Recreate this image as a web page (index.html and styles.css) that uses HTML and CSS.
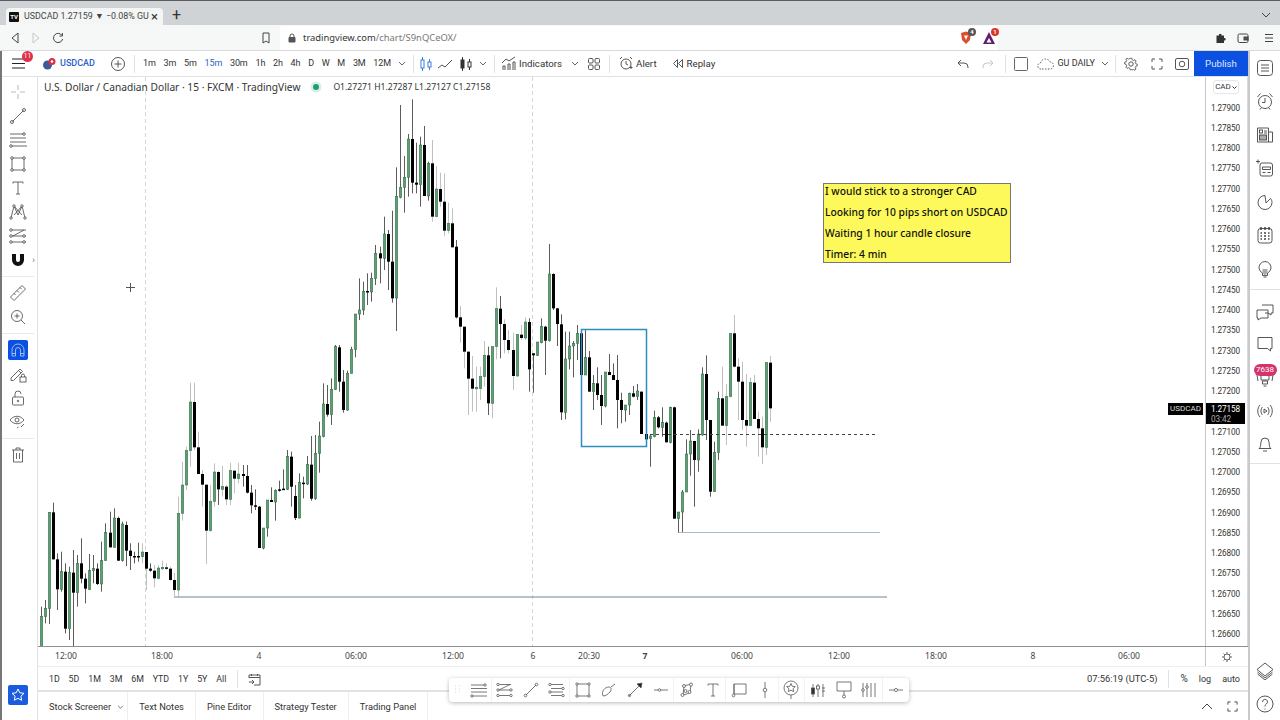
FILE: index.html
```html
<!DOCTYPE html>
<html lang="en">
<head>
<meta charset="utf-8">
<title>USDCAD chart</title>
<link rel="stylesheet" href="styles.css">
</head>
<body>
<div class="tabbar">
  <div class="tab">
    <span class="favicon">TV</span>
    <span class="tab-title">USDCAD 1.27159 ▼ −0.08% GU</span>
    <span class="tab-x">×</span>
  </div>
  <span class="tab-plus">+</span>
  <svg class="tab-chev" width="10" height="6" viewBox="0 0 10 6"><path d="M1 1l4 4 4-4"/></svg>
</div>
<div class="navbar">
  <svg class="nav-i nav-back" width="10" height="12" viewBox="0 0 10 12"><path d="M8 1L2 6l6 5z"/></svg>
  <svg class="nav-i nav-fwd" width="10" height="12" viewBox="0 0 10 12"><path d="M2 1l6 5-6 5z"/></svg>
  <svg class="nav-i nav-reload" width="12" height="12" viewBox="0 0 12 12"><path d="M10 3.500A4.600 4.600 0 1 0 10.600 7M10.400 1v3H7.500"/></svg>
  <svg class="nav-i nav-book" width="10" height="12" viewBox="0 0 10 12"><path d="M2 1h6v10L5 9l-3 2z"/></svg>
  <div class="urlbox">
    <svg class="lock" width="8" height="10" viewBox="0 0 8 10"><path d="M1 4.500h6V9H1z" fill="#555"/><path d="M2 4.500V3a2 2 0 0 1 4 0v1.500"/></svg>
    <span class="url">tradingview.com<span class="url-path">/chart/S9nQCeOX/</span></span>
  </div>
  <span class="ext ext-brave"><svg width="14" height="14" viewBox="0 0 14 14"><path d="M2 2l5-1.500 5 1.500-1 7-4 4-4-4z" fill="#d9502e" stroke="none"/><path d="M5 4.500h4L7 9z" fill="#fff" stroke="none"/></svg><b class="ext-badge ext-gray">4</b></span>
  <span class="ext ext-bat"><svg width="14" height="14" viewBox="0 0 14 14"><path d="M7 1l6 12H1z" fill="#5d1f6e" stroke="none"/><path d="M7 7l2.500 4.500h-5z" fill="#fff" stroke="none"/></svg><b class="ext-badge ext-red">1</b></span>
  <svg class="nav-i nav-puzzle" width="12" height="12" viewBox="0 0 12 12"><path d="M1.500 3.500h2.500a1.300 1.300 0 1 1 2.500 0H9V6a1.300 1.300 0 1 1 0 2.500V11H1.500z" fill="#333" stroke="none"/></svg>
  <svg class="nav-i nav-wallet" width="12" height="12" viewBox="0 0 12 12"><rect x="1" y="2" width="10" height="8.500" rx="1.500"/><rect x="7" y="5" width="4" height="3" fill="#555"/></svg>
  <svg class="nav-i nav-menu" width="10" height="10" viewBox="0 0 10 10"><path d="M1 1.500h8M1 5h8M1 8.500h8"/></svg>
</div>
<div class="app">
  <div class="topbar">
    <div class="hamb">
      <svg width="13" height="11" viewBox="0 0 13 11"><path d="M0 1h13M0 5.500h13M0 10h13"/></svg>
      <b class="hamb-badge">11</b>
    </div>
    <div class="symbol">
      <svg width="13" height="13" viewBox="0 0 13 13"><circle cx="4.500" cy="8" r="4.500" fill="#3c5a9a" stroke="none"/><circle cx="9" cy="4.500" r="3.500" fill="#d8324a" stroke="none"/><circle cx="9" cy="4.500" r="1.200" fill="#fff" stroke="none"/></svg>
      <span>USDCAD</span>
    </div>
    <svg class="add-sym" width="16" height="16" viewBox="0 0 16 16"><circle cx="8" cy="8" r="6.500"/><path d="M8 4.500v7M4.500 8h7"/></svg>
    <i class="sep sep-sym"></i>
    <div class="intervals">
      <span>1m</span><span>3m</span><span>5m</span><span class="active">15m</span><span>30m</span><span>1h</span><span>2h</span><span>4h</span><span>D</span><span>W</span><span>M</span><span>3M</span><span>12M</span>
    </div>
    <svg class="chev chev-iv" width="8" height="5" viewBox="0 0 8 5"><path d="M1 1l3 3 3-3"/></svg>
    <i class="sep sep-iv"></i>
    <svg class="tb tb-candle" width="14" height="16" viewBox="0 0 14 16"><path d="M3.500 1v14M10.500 3v11" stroke="#3d7fd8"/><rect x="2" y="4" width="3" height="8" fill="#fff" stroke="#3d7fd8"/><rect x="9" y="6" width="3" height="5" fill="#fff" stroke="#3d7fd8"/></svg>
    <svg class="tb tb-line" width="16" height="10" viewBox="0 0 16 10"><path d="M1 9l4-3 3 2 7-7"/></svg>
    <svg class="tb tb-candle2" width="14" height="16" viewBox="0 0 14 16"><path d="M3.500 1v14M10.500 3v11"/><rect x="2" y="4" width="3" height="8" fill="#333"/><rect x="9" y="6" width="3" height="5" fill="#fff"/></svg>
    <svg class="chev chev-ct" width="8" height="5" viewBox="0 0 8 5"><path d="M1 1l3 3 3-3"/></svg>
    <i class="sep sep-ct"></i>
    <svg class="tb tb-ind" width="16" height="15" viewBox="0 0 16 15"><path d="M1 7l4-4 3 2 6-4M2 14V10h2v4M7 14V8h2v6M12 14V6h2v8"/></svg>
    <span class="tb-text tb-ind-t">Indicators</span>
    <svg class="chev chev-ind" width="8" height="5" viewBox="0 0 8 5"><path d="M1 1l3 3 3-3"/></svg>
    <svg class="tb tb-grid" width="12" height="12" viewBox="0 0 12 12"><rect x=".5" y=".5" width="4.500" height="4.500" rx="1"/><rect x="7" y=".5" width="4.500" height="4.500" rx="1"/><rect x=".5" y="7" width="4.500" height="4.500" rx="1"/><rect x="7" y="7" width="4.500" height="4.500" rx="1"/></svg>
    <i class="sep sep-grid"></i>
    <svg class="tb tb-alert" width="15" height="15" viewBox="0 0 15 15"><circle cx="7" cy="8" r="5"/><path d="M7 5v3l2 1M1 3l2-2M13 3l-2-2M12 13v-3M10.500 11.500h3"/></svg>
    <span class="tb-text tb-alert-t">Alert</span>
    <svg class="tb tb-replay" width="12" height="11" viewBox="0 0 12 11"><path d="M5.500 1.500L1.500 5.500l4 4zM10.500 1.500l-4 4 4 4z"/></svg>
    <span class="tb-text tb-replay-t">Replay</span>
    <svg class="tb tb-undo" width="12" height="10" viewBox="0 0 12 10"><path d="M4 1L1 4l3 3M1 4h6a4 4 0 0 1 4 4v1"/></svg>
    <svg class="tb tb-redo" width="12" height="10" viewBox="0 0 12 10"><path d="M8 1l3 3-3 3M11 4H5a4 4 0 0 0-4 4v1"/></svg>
    <i class="sep sep-undo"></i>
    <svg class="tb tb-square" width="14" height="14" viewBox="0 0 14 14"><rect x=".5" y=".5" width="13" height="13" rx="1"/></svg>
    <svg class="tb tb-cloud" width="17" height="13" viewBox="0 0 17 13"><path d="M4 12a3 3 0 0 1-.500-6A5 5 0 0 1 13 5a3.500 3.500 0 0 1 0 7z" stroke-dasharray="1.500 1.500"/></svg>
    <span class="tb-text tb-layout">GU DAILY</span>
    <svg class="chev chev-lay" width="8" height="5" viewBox="0 0 8 5"><path d="M1 1l3 3 3-3"/></svg>
    <i class="sep sep-lay"></i>
    <svg class="tb tb-gear" width="14" height="14" viewBox="0 0 14 14"><circle cx="7" cy="7" r="2.200"/><path d="M6 .7h2l.4 1.700 1.500.7 1.500-.9 1.300 1.500-.9 1.500.5 1.500 1.600.5v2l-1.600.4-.6 1.500.9 1.500-1.400 1.300-1.500-.9-1.500.6L8 13.300H6l-.4-1.600-1.500-.6-1.500.9L1.300 10.500l.9-1.500-.6-1.500L0 7V5l1.600-.4.600-1.500-.9-1.500L2.700.700l1.500.9 1.400-.6z" transform="translate(.7 .7) scale(.9)"/></svg>
    <svg class="tb tb-full" width="12" height="12" viewBox="0 0 12 12"><path d="M1 4V1h3M8 1h3v3M11 8v3H8M4 11H1V8"/></svg>
    <svg class="tb tb-cam" width="14" height="13" viewBox="0 0 14 13"><rect x=".5" y="1.500" width="13" height="11" rx="1.500"/><circle cx="7" cy="7" r="2.800"/></svg>
    <div class="publish">Publish</div>
  </div>
  <div class="workspace">
    <nav class="lefttools">
      <div class="group">
        <span class="tool"><svg width="16" height="16" viewBox="0 0 16 16" class="faint"><path d="M8 1v5M8 10v5M1 8h5M10 8h5"/></svg></span>
        <span class="tool"><svg width="18" height="18" viewBox="0 0 18 18"><path d="M3.500 14.500l11-11"/><circle cx="3" cy="15" r="1.500"/><circle cx="15" cy="3" r="1.500"/></svg></span>
        <span class="tool"><svg width="18" height="18" viewBox="0 0 18 18"><path d="M1 3h13M1 7h16M1 11h16M3 15h15"/><circle cx="15" cy="3" r="1.300"/><circle cx="2" cy="15" r="1.300"/></svg></span>
        <span class="tool"><svg width="18" height="18" viewBox="0 0 18 18"><path d="M3 3h12v12H3z"/><circle cx="3" cy="3" r="1.300" fill="#fff"/><circle cx="15" cy="3" r="1.300" fill="#fff"/><circle cx="3" cy="15" r="1.300" fill="#fff"/><circle cx="15" cy="15" r="1.300" fill="#fff"/></svg></span>
        <span class="tool"><svg width="16" height="16" viewBox="0 0 16 16"><path d="M3 2h10M8 2v12M6 14h4M3 2v1.500M13 2v1.500"/></svg></span>
        <span class="tool"><svg width="18" height="18" viewBox="0 0 18 18"><path d="M2 15L5 3l4 9 4-9 3 12M5 3l8 9M13 3L5 12"/><circle cx="5" cy="3" r="1.200" fill="#fff"/><circle cx="13" cy="3" r="1.200" fill="#fff"/><circle cx="2" cy="15" r="1.200" fill="#fff"/><circle cx="16" cy="15" r="1.200" fill="#fff"/></svg></span>
        <span class="tool"><svg width="18" height="18" viewBox="0 0 18 18"><path d="M3 3h14M3 9h14M3 15h14M4 9l11-6" stroke-width=".8"/><circle cx="2" cy="3" r="1.300" fill="#fff"/><circle cx="2" cy="9" r="1.300" fill="#fff"/><circle cx="2" cy="15" r="1.300" fill="#fff"/><circle cx="15" cy="15" r="1.300" fill="#fff"/><circle cx="15" cy="9" r="1.300" fill="#fff"/></svg></span>
        <span class="tool tool-magnet"><svg width="14" height="14" viewBox="0 0 14 14"><path d="M1 1h4v6a2 2 0 0 0 4 0V1h4v6a6 6 0 0 1-12 0z" fill="#111" stroke="none"/></svg><em>›</em></span>
      </div>
      <div class="group">
        <span class="tool"><svg width="18" height="18" viewBox="0 0 18 18"><path d="M1.500 13L13 1.500 16.500 5 5 16.500zM5 9.500l1.500 1.500M8 6.500l2 2M11 3.500l1.500 1.500"/></svg></span>
        <span class="tool"><svg width="16" height="16" viewBox="0 0 16 16"><circle cx="7" cy="7" r="5.500"/><path d="M11 11l4 4M7 4.500v5M4.500 7h5"/></svg></span>
      </div>
      <div class="group">
        <span class="tool tool-on"><svg width="14" height="14" viewBox="0 0 14 14"><path d="M1 13V7a6 6 0 0 1 12 0v6H9.500V7a2.500 2.500 0 0 0-5 0v6zM1 10.500h3.500M9.500 10.500H13"/></svg></span>
        <span class="tool"><svg width="18" height="18" viewBox="0 0 18 18"><path d="M2 13l9-9 2.500 2.500-9 9H2zM9.500 5.500L12 8"/><rect x="11" y="12" width="6" height="5" fill="#fff"/><path d="M12.500 12v-1.500a1.500 1.500 0 0 1 3 0V12"/></svg></span>
        <span class="tool"><svg width="14" height="16" viewBox="0 0 14 16"><rect x="1.500" y="7" width="11" height="8" rx="1"/><path d="M4 7V4a3 3 0 0 1 6 0"/><circle cx="7" cy="11" r=".8"/></svg></span>
        <span class="tool"><svg width="18" height="18" viewBox="0 0 18 18"><path d="M1 7c4-5 10-5 14 0-4 5-10 5-14 0z"/><circle cx="8" cy="7" r="2"/><path d="M8 15l1.500-1M12 14l3-3"/></svg></span>
      </div>
      <div class="group group-last">
        <span class="tool"><svg width="14" height="16" viewBox="0 0 14 16"><path d="M1 3h12M5 3V1h4v2M2.500 3v12h9V3M5.500 6v6M8.500 6v6"/></svg></span>
      </div>
      <span class="star"><svg width="14" height="14" viewBox="0 0 14 14"><path d="M7 1l1.800 3.800 4.200.5-3.100 2.900.8 4.100L7 10.300l-3.700 2 .8-4.100L1 5.300l4.200-.5z"/></svg></span>
    </nav>
    <div class="chartcol">
      <div class="chartrow">
        <div class="chart" id="chart">
          <div class="legend">
            <span class="legend-title">U.S. Dollar / Canadian Dollar · 15 · FXCM · TradingView</span>
            <span class="legend-dot"></span>
            <span class="legend-ohlc">O1.27271 H1.27287 L1.27127 C1.27158</span>
          </div>
          <div class="note">
            <p>I would stick to a stronger CAD</p>
            <p>Looking for 10 pips short on USDCAD</p>
            <p>Waiting 1 hour candle closure</p>
            <p>Timer: 4 min</p>
          </div>
          <span class="sym-tag">USDCAD</span>
        </div>
        <div class="priceaxis">
          <span class="cad">CAD<svg width="5" height="3" viewBox="0 0 5 3"><path d="M.5.500l2 2 2-2"/></svg></span>
          <div class="prices">
            <span>1.27900</span><span>1.27850</span><span>1.27800</span><span>1.27750</span><span>1.27700</span><span>1.27650</span><span>1.27600</span><span>1.27550</span><span>1.27500</span><span>1.27450</span><span>1.27400</span><span>1.27350</span><span>1.27300</span><span>1.27250</span><span>1.27200</span><span></span><span>1.27100</span><span>1.27050</span><span>1.27000</span><span>1.26950</span><span>1.26900</span><span>1.26850</span><span>1.26800</span><span>1.26750</span><span>1.26700</span><span>1.26650</span><span>1.26600</span>
          </div>
          <div class="price-tag"><b>1.27158</b><i>03:42</i></div>
        </div>
      </div>
      <div class="timeaxis">
        <div class="ticks">
          <span style="left:28px">12:00</span><span style="left:124px">18:00</span><span style="left:221px">4</span><span style="left:318px">06:00</span><span style="left:415px">12:00</span><span style="left:495px">6</span><span style="left:551px">20:30</span><span class="tick-b" style="left:607px">7</span><span style="left:704px">06:00</span><span style="left:801px">12:00</span><span style="left:898px">18:00</span><span style="left:995px">8</span><span style="left:1091px">06:00</span>
        </div>
        <div class="axis-corner"><svg width="12" height="12" viewBox="0 0 12 12"><circle cx="6" cy="6" r="3"/><path d="M6 1v2M6 9v2M1 6h2M9 6h2M2.500 2.500l1.300 1.300M8.200 8.200l1.300 1.300M2.500 9.500l1.300-1.300M8.200 3.800l1.300-1.300"/></svg></div>
      </div>
      <div class="rangebar">
        <div class="ranges"><span>1D</span><span>5D</span><span>1M</span><span>3M</span><span>6M</span><span>YTD</span><span>1Y</span><span>5Y</span><span>All</span></div>
        <i class="sep sep-range"></i>
        <svg class="range-cal" width="13" height="13" viewBox="0 0 13 13"><path d="M1 5V2h11v10H6M1 4.500h11M3.500 1v2M9.500 1v2M1 9h5M4 7l2 2-2 2"/></svg>
        <div class="range-right">
          <span class="clock">07:56:19 (UTC-5)</span>
          <i class="sep"></i>
          <span class="pct">%</span><span>log</span><span>auto</span>
        </div>
      </div>
      <div class="tabs">
        <span class="btab btab-first">Stock Screener<svg width="7" height="4" viewBox="0 0 8 5"><path d="M1 1l3 3 3-3"/></svg></span>
        <span class="btab">Text Notes</span>
        <span class="btab">Pine Editor</span>
        <span class="btab">Strategy Tester</span>
        <span class="btab">Trading Panel</span>
        <div class="tabs-right">
          <svg width="12" height="7" viewBox="0 0 12 7"><path d="M1 6l5-5 5 5"/></svg>
          <svg width="11" height="11" viewBox="0 0 12 12"><path d="M1 4V1h3M8 1h3v3M11 8v3H8M4 11H1V8"/></svg>
        </div>
      </div>
    </div>
    <div class="floatbar">
      <svg class="grip" width="8" height="10" viewBox="0 0 8 10"><path d="M1 1h.5M1 4h.5M1 7h.5M5 1h.5M5 4h.5M5 7h.5" stroke-width="1.500"/></svg>
      <span class="fb fb-sep"><svg width="18" height="16" viewBox="0 0 18 16"><path d="M1 3h13M1 6.500h16M1 10h16M3 14h14"/><circle cx="15" cy="3" r="1.200" fill="#fff"/><circle cx="2" cy="14" r="1.200" fill="#fff"/></svg></span>
      <span class="fb"><svg width="18" height="16" viewBox="0 0 18 16"><path d="M3 2.500h12M3 8h12M3 13.500h12M3 8l11-5.500" stroke-width=".8"/><circle cx="2" cy="2.500" r="1.200" fill="#fff"/><circle cx="2" cy="8" r="1.200" fill="#fff"/><circle cx="2" cy="13.500" r="1.200" fill="#fff"/><circle cx="15" cy="8" r="1.200" fill="#fff"/><circle cx="15" cy="13.500" r="1.200" fill="#fff"/></svg></span>
      <span class="fb"><svg width="16" height="16" viewBox="0 0 16 16"><path d="M3 13L13 3"/><circle cx="2.500" cy="13.500" r="1.300"/><circle cx="13.500" cy="2.500" r="1.300"/></svg></span>
      <span class="fb fb-sep"><svg width="18" height="16" viewBox="0 0 18 16"><path d="M3 2.500h12M3 6.500h12M3 10h12M3 13.500h12"/><circle cx="2" cy="2.500" r="1.200" fill="#fff"/><circle cx="15" cy="6.500" r="1.200" fill="#fff"/><circle cx="2" cy="10" r="1.200" fill="#fff"/><circle cx="15" cy="13.500" r="1.200" fill="#fff"/></svg></span>
      <span class="fb"><svg width="16" height="16" viewBox="0 0 16 16"><path d="M2 2h12v12H2z"/><circle cx="2" cy="2" r="1.200" fill="#fff"/><circle cx="14" cy="2" r="1.200" fill="#fff"/><circle cx="2" cy="14" r="1.200" fill="#fff"/><circle cx="14" cy="14" r="1.200" fill="#fff"/></svg></span>
      <span class="fb"><svg width="16" height="16" viewBox="0 0 16 16"><path d="M2 14c-2-5 2-9 6-9 2 0 3 2 1 5-2 2-4 4-7 4zM10 5l4-3"/></svg></span>
      <span class="fb"><svg width="16" height="16" viewBox="0 0 16 16"><path d="M2 14L13 3"/><circle cx="2.500" cy="13.500" r="1.200"/><path d="M15 1l-1 5-4-4z" fill="#222"/></svg></span>
      <span class="fb fb-sep"><svg width="16" height="8" viewBox="0 0 16 8"><path d="M1 4h4M8 4h7"/><circle cx="6.500" cy="4" r="1.300"/></svg></span>
      <span class="fb"><svg width="16" height="16" viewBox="0 0 16 16"><path d="M4 13l1-9 7-2-1 9z" stroke-width=".8"/><circle cx="3.500" cy="13" r="1.500" fill="#fff"/><circle cx="5" cy="4" r="1.500" fill="#fff"/><circle cx="12" cy="2.500" r="1.500" fill="#fff"/><circle cx="10.500" cy="10" r="1.500" fill="#fff"/><circle cx="6.500" cy="9" r="1.500" fill="#fff"/></svg></span>
      <span class="fb fb-sep"><svg width="14" height="16" viewBox="0 0 14 16"><path d="M2 2h10M7 2v12M5 14h4M2 2v1.500M12 2v1.500"/></svg></span>
      <span class="fb"><svg width="16" height="16" viewBox="0 0 16 16"><path d="M3 2h12v10H5l-2 0zM3 2v10"/><circle cx="2.500" cy="13.500" r="1.300"/></svg></span>
      <span class="fb fb-sep"><svg width="6" height="18" viewBox="0 0 6 18"><path d="M3 1v6M3 11v6"/><circle cx="3" cy="9" r="1.800"/></svg></span>
      <span class="fb fb-sep"><svg width="16" height="20" viewBox="0 0 16 20"><circle cx="8" cy="8" r="7"/><path d="M8 3.500l1.300 2.800 3 .3-2.200 2 .6 3L8 10.200l-2.700 1.400.6-3-2.200-2 3-.3zM8 15v4"/></svg></span>
      <span class="fb"><svg width="16" height="16" viewBox="0 0 16 16"><path d="M3 2v13M8 2v13M13 2v13" stroke-width=".8"/><rect x="1.500" y="6" width="3" height="6" fill="#333"/><rect x="6.500" y="4" width="3" height="3" fill="#fff"/><path d="M12 6h3M12 9h3"/></svg></span>
      <span class="fb"><svg width="16" height="18" viewBox="0 0 16 18"><path d="M1 1h14v9H1zM8 10v4"/><circle cx="8" cy="15.500" r="1.500"/></svg></span>
      <span class="fb fb-sep"><svg width="16" height="16" viewBox="0 0 16 16"><path d="M2 1v14M6 1v14M10 1v14M14 1v14"/><circle cx="2" cy="8" r="1.300" fill="#fff"/><circle cx="6" cy="5" r="1.300" fill="#fff"/></svg></span>
      <span class="fb"><svg width="16" height="8" viewBox="0 0 16 8"><path d="M1 4h5M10 4h5"/><circle cx="8" cy="4" r="1.600"/></svg></span>
    </div>
  </div>
  <aside class="righttools">
    <span class="rt"><svg width="18" height="18" viewBox="0 0 18 18"><rect x="1.500" y="1.500" width="15" height="15" rx="3"/><path d="M5 6h8M5 9h8M5 12h8"/></svg></span>
    <span class="rt"><svg width="18" height="18" viewBox="0 0 18 18"><circle cx="9" cy="10" r="6.500"/><path d="M9 6v4.500h-3M1.500 5l3-3.500M16.500 5l-3-3.500M5 16l-1 1.500M13 16l1 1.500"/></svg></span>
    <span class="rt"><svg width="18" height="18" viewBox="0 0 18 18"><path d="M1.500 2h11v14h-11zM12.500 6h4v10h-4"/><rect x="3.500" y="4" width="3" height="3"/><rect x="3.500" y="9" width="7" height="5" fill="#aaa"/><path d="M8 5h3M8 7h3"/></svg></span>
    <span class="rt"><svg width="18" height="18" viewBox="0 0 18 18"><rect x="4" y="4" width="12.500" height="13" rx="2"/><path d="M6.500 8h8v2.500h-8zM6.500 13.500h3M11.500 13.500h3M2 .5v4M0 2.500h4"/></svg></span>
    <span class="rt"><svg width="16" height="16" viewBox="0 0 16 16"><path d="M8 1.500a7 7 0 1 0 7 7c0-1.500-.5-3-1.500-4L9 9 8 1.500z"/></svg></span>
    <span class="rt"><svg width="16" height="18" viewBox="0 0 16 18"><rect x="1" y="2.500" width="14" height="14.500" rx="2.500"/><path d="M4 1v3M8 1v3M12 1v3M3.500 7h1.500M7 7h2M11 7h1.500M3.500 10h1.500M7 10h2M11 10h1.500M3.500 13h1.500M7 13h2M11 13h1.500" stroke-width="1.500"/></svg></span>
    <span class="rt"><svg width="14" height="18" viewBox="0 0 14 18"><path d="M4.500 13a6 6 0 1 1 5 0v2.500h-5zM5.500 17h3"/><path d="M4.500 13l2.500 2.500 2.500-2.500V9h-5z" fill="#aaa" stroke="none"/></svg></span>
    <i class="rt-sep"></i>
    <span class="rt rt-a"><svg width="18" height="18" viewBox="0 0 18 18"><path d="M6 2h11v8h-2v2l-3-2H9M1 7h11v8H5l-3 2v-2H1z" fill="#fff"/></svg></span>
    <span class="rt rt-b"><svg width="16" height="16" viewBox="0 0 16 16"><path d="M1 1.500h14v11h-1.500l0 2.500-3-2.500H1z"/></svg></span>
    <span class="rt rt-c"><svg width="20" height="20" viewBox="0 0 20 20"><path d="M6 9a4 4 0 0 1 8 0v4H6zM7.500 14h5v3h-5zM8.500 19h3M2 8l1 6M18 8l-1 6"/></svg><b class="count">7638</b></span>
    <span class="rt rt-d"><svg width="18" height="14" viewBox="0 0 18 14"><path d="M4 1C1 4 1 10 4 13M14 1c3 3 3 9 0 12M6.500 3c-2 2-2 6 0 8M11.500 3c2 2 2 6 0 8M8 5l3 2-3 2z"/></svg></span>
    <span class="rt rt-e"><svg width="14" height="16" viewBox="0 0 14 16"><path d="M1 12.500c2-1 1.500-4 2-6.500a4 4 0 0 1 8 0c.5 2.500 0 5.500 2 6.500zM5 15h4"/></svg></span>
    <i class="rt-sep rt-sep2"></i>
    <span class="rt rt-layers"><svg width="18" height="18" viewBox="0 0 18 18"><path d="M9 1l8 6.500L9 14 1 7.500zM1.500 10L9 16l7.500-6M1.500 12L9 18l7.500-6"/></svg></span>
    <span class="rt rt-last"><svg width="18" height="18" viewBox="0 0 18 18"><circle cx="9" cy="9" r="8"/><path d="M6.500 7a2.500 2.500 0 1 1 3.800 2c-1 .7-1.300 1.200-1.300 2.500M9 13.500v1"/></svg></span>
  </aside>
</div>
<script src="chart.js"></script>
</body>
</html>
```

FILE: styles.css
```css
* { box-sizing: border-box; }
html, body { margin: 0; height: 720px; overflow: hidden; }
body { width: 1280px; background: #fff; color: #333; font: 11px/1 Roboto, "Liberation Sans", sans-serif; display: flex; flex-direction: column; }
svg { fill: none; stroke: #333; stroke-width: 1; flex: none; display: block; }

.tabbar { height: 25px; flex: none; background: #d0d3d5; border-top: 1px solid #5a5d5f; display: flex; align-items: flex-end; padding-left: 6px; }
.tab { width: 157px; height: 17px; background: #f4f5f5; border-radius: 4px 4px 0 0; display: flex; align-items: center; padding-left: 3px; }
.favicon { width: 10px; height: 10px; background: #111; color: #fff; font-size: 6px; font-weight: 700; line-height: 10px; text-align: center; border-radius: 1px; flex: none; }
.tab-title { width: 123px; margin-left: 5px; white-space: nowrap; font-size: 8.900px; color: #444; }
.tab-x { margin-left: 4px; font-size: 13px; color: #333; }
.tab-plus { margin: 0 0 2px 9px; font-size: 16px; color: #333; }
.tab-chev { margin: 0 9px 7px auto; stroke: #444; }

.navbar { height: 26px; flex: none; background: #f6f7f7; display: flex; align-items: center; border-bottom: 1px solid #d8dadb; }
.nav-i { stroke: #444; }
.nav-back { margin-left: 10px; }
.nav-fwd { margin-left: 11px; stroke: #c4c6c8; }
.nav-reload { margin-left: 11px; }
.nav-book { margin-left: 197px; }
.urlbox { width: 718px; height: 24px; margin-left: 9px; background: #fff; display: flex; align-items: center; padding-left: 8px; border-radius: 2px; }
.lock { stroke: #555; }
.url { margin-left: 7px; font: 9.400px/1 "Noto Sans", sans-serif; color: #333; }
.url-path { color: #777; }
.ext { position: relative; display: block; flex: none; }
.ext-brave { margin-left: -39px; }
.ext-bat { margin-left: 9px; }
.ext-badge { position: absolute; top: -3px; left: 9px; width: 8px; height: 8px; border-radius: 50%; color: #fff; font-size: 6px; line-height: 8px; text-align: center; }
.ext-gray { background: #555; }
.ext-red { background: #d9342b; }
.nav-puzzle { margin-left: 219px; }
.nav-wallet { margin-left: 10px; }
.nav-menu { margin-left: 15px; }

.app { flex: 1; display: grid; grid-template-columns: 1246px 32px; grid-template-rows: 26px 1fr; border-left: 2px solid #777; min-height: 0; }
.topbar { grid-column: 1; display: flex; align-items: center; height: 26px; border-bottom: 1px solid #e0e3e5; font-size: 9.700px; color: #333; }
.hamb { position: relative; margin-left: 10px; }
.hamb svg { stroke: #222; stroke-width: 1.200; }
.hamb-badge { position: absolute; left: 10px; top: -7px; width: 11px; height: 11px; border-radius: 50%; background: #e0314b; color: #fff; font-size: 6.500px; font-weight: 400; line-height: 11px; text-align: center; }
.symbol { display: flex; align-items: center; margin-left: 18px; gap: 4px; color: #2962c8; font-size: 9px; font-weight: 500; }
.add-sym { margin-left: 15px; stroke: #555; }
.sep { display: block; width: 1px; height: 18px; background: #e0e3e5; flex: none; }
.sep-sym { margin-left: 8px; }
.intervals { display: flex; gap: 7.750px; margin-left: 8px; font-size: 9px; letter-spacing: -.1px; }
.intervals .active { color: #2962c8; }
.chev { stroke: #666; }
.chev-iv { margin-left: 7px; }
.sep-iv { margin-left: 7px; }
.tb-candle { margin-left: 5px; }
.tb-line { margin-left: 4px; stroke: #555; }
.tb-candle2 { margin-left: 6px; }
.chev-ct { margin-left: 6px; }
.sep-ct { margin-left: 7px; }
.tb-ind { margin-left: 6px; stroke: #555; }
.tb-ind-t { margin-left: 2px; }
.chev-ind { margin-left: 9px; }
.tb-grid { margin-left: 9px; stroke: #555; }
.sep-grid { margin-left: 9px; }
.tb-alert { margin-left: 8.500px; stroke: #555; }
.tb-alert-t { margin-left: 2.500px; }
.tb-replay { margin-left: 15px; stroke: #555; }
.tb-replay-t { margin-left: 3px; }
.tb-undo { margin-left: auto; stroke: #555; }
.tb-redo { margin-left: 13px; stroke: #c4c6c8; }
.sep-undo { margin-left: 11px; }
.tb-square { margin-left: 8px; stroke: #666; }
.tb-cloud { margin-left: 9.500px; stroke: #555; }
.tb-layout { margin-left: 3px; font-size: 9px; }
.chev-lay { margin-left: 6px; }
.sep-lay { margin-left: 6px; }
.tb-gear { margin-left: 8px; stroke: #555; }
.tb-full { margin-left: 13px; stroke: #555; }
.tb-cam { margin-left: 12px; stroke: #555; }
.publish { width: 54px; height: 25px; margin-left: 5px; background: #0b50e0; color: #dbe6fb; display: flex; align-items: center; justify-content: center; font-size: 9.700px; }

.workspace { grid-column: 1; grid-row: 2; display: flex; position: relative; min-height: 0; }
.lefttools { width: 36px; flex: none; display: flex; flex-direction: column; border-right: 1px solid #e0e3e5; padding: 3px 3px 0 0; }
.group { padding-bottom: 4px; margin-bottom: 4px; border-bottom: 1px solid #e8eaec; }
.group-last { border-bottom: 0; }
.tool { height: 24px; display: flex; align-items: center; justify-content: center; position: relative; }
.tool svg { stroke: #444; stroke-width: .8; }
.tool .faint { stroke: #aaa; }
.tool-magnet em { position: absolute; right: -1px; font-style: normal; font-size: 9px; color: #666; }
.tool-on { width: 20px; height: 20px; margin: 2px auto; background: #0b50e0; border-radius: 2px; }
.tool-on svg { stroke: #bcd3f7; }
.star { width: 20px; height: 20px; margin: auto auto 15px 6px; background: #1a5be0; border-radius: 2px; display: flex; align-items: center; justify-content: center; }
.star svg { stroke: #fff; }

.chartcol { flex: 1; display: flex; flex-direction: column; min-width: 0; }
.chartrow { height: 570px; flex: none; display: flex; border-bottom: 1px solid #8e9091; }
.chart { flex: 1; position: relative; overflow: hidden; }
.chart > svg { position: absolute; left: 0; top: 0; stroke: none; }
.legend { position: absolute; left: 6px; top: 5px; display: flex; align-items: center; z-index: 2; font-family: "Noto Sans", sans-serif; }
.legend-title { font-size: 10.200px; color: #333; }
.legend-dot { width: 6px; height: 6px; margin-left: 13px; border-radius: 50%; background: #1f9e70; box-shadow: 0 0 0 2.500px #d7efe6; }
.legend-ohlc { margin-left: 14px; font-size: 8.600px; color: #333; }
.note { position: absolute; left: 785px; top: 106px; width: 188px; height: 80px; background: #fdf95a; border: 1px solid #777; padding: 0 1px 1px; display: flex; flex-direction: column; justify-content: space-between; font: 500 10.300px/1 "Noto Sans", sans-serif; color: #111; z-index: 2; }
.note p { margin: 0; line-height: 14px; white-space: nowrap; }
.sym-tag { position: absolute; right: 2px; top: 326px; width: 35px; height: 12px; background: #000; color: #ddd; font-size: 8px; line-height: 12px; text-align: center; z-index: 2; }

.priceaxis { width: 43px; flex: none; position: relative; border-left: 1px solid #c4c6c8; border-right: 1px solid #d8dadb; }
.cad { position: absolute; left: 7px; top: 3px; width: 26px; height: 14px; border: 1px solid #e4e6e8; border-radius: 3px; font-size: 8px; display: flex; align-items: center; justify-content: center; gap: 1px; background: #fff; }
.cad svg { stroke: #333; }
.prices { padding-top: 20.500px; display: flex; flex-direction: column; }
.prices span { height: 20.250px; line-height: 20.250px; padding-left: 5px; font-size: 8.200px; letter-spacing: -.1px; color: #333; }
.price-tag { position: absolute; left: 0; top: 326px; width: 39px; height: 21px; background: #000; padding: 2px 0 0 5px; display: flex; flex-direction: column; gap: 1.500px; font-size: 8.200px; letter-spacing: -.1px; }
.price-tag b { font-weight: 400; color: #fff; }
.price-tag i { font-style: normal; color: #aaa; }

.timeaxis { height: 20px; flex: none; display: flex; border-bottom: 1px solid #eceeef; }
.ticks { flex: 1; position: relative; }
.ticks span { position: absolute; top: 5px; transform: translateX(-50%); font: 8.600px/1 "Noto Sans", sans-serif; color: #444; }
.ticks .tick-b { font-weight: 700; }
.axis-corner { width: 43px; flex: none; border-left: 1px solid #c4c6c8; display: flex; align-items: center; justify-content: center; }
.axis-corner svg { stroke: #666; }

.rangebar { height: 25px; flex: none; display: flex; align-items: center; padding-top: 1px; border-bottom: 2px solid #e0e3e5; font-size: 8.800px; color: #333; }
.ranges { display: flex; gap: 8.900px; margin-left: 11px; }
.sep-range { margin-left: 11px; }
.range-cal { margin-left: 10px; stroke: #555; }
.range-right { margin-left: auto; display: flex; align-items: center; gap: 11px; padding-right: 8px; font-size: 9px; }
.clock { font-size: 9.400px; }
.pct { font-size: 10px; }

.tabs { flex: 1; display: flex; align-items: center; font-size: 9.300px; color: #333; }
.btab { height: 100%; display: flex; align-items: center; padding: 1px 11px 0; border-right: 1px solid #eceeef; gap: 6px; }
.btab-first { padding-right: 3px; }
.btab svg { stroke: #555; }
.tabs-right { margin-left: auto; display: flex; align-items: center; gap: 13.500px; padding-right: 10.500px; }
.tabs-right svg { stroke: #444; }

.floatbar { position: absolute; left: 447px; top: 601px; width: 460px; height: 24px; background: #fff; border-radius: 4px; box-shadow: 0 1px 4px rgba(0,0,0,.28); display: flex; align-items: center; padding-left: 5px; z-index: 5; }
.grip { stroke: #ccc; margin-right: 4px; }
.fb { width: 26.050px; height: 100%; display: flex; align-items: center; justify-content: center; flex: none; }
.fb-sep { border-right: 1px solid #f1f2f3; }
.fb svg { stroke: #555; stroke-width: .8; }

.righttools { grid-column: 2; grid-row: 1 / 3; border-left: 2px solid #c8cacc; display: flex; flex-direction: column; }
.rt { height: 33.500px; display: flex; align-items: center; justify-content: center; flex: none; position: relative; }
.rt svg { stroke: #444; stroke-width: .9; }
.rt-sep { display: block; height: 1px; background: #e0e3e5; margin-top: 3px; margin-bottom: 6px; }
.rt-a { height: 32px; }
.rt-b { height: 32px; }
.rt-c { height: 34px; }
.rt-d { height: 34px; }
.rt-e { height: 32px; }
.rt-sep2 { margin: 3px 0 auto; }
.rt-layers { margin-top: auto; }
.rt-last { height: 32px; }
.count { position: absolute; left: 3.500px; top: 4px; width: 23px; height: 12px; border-radius: 6px; background: #d6336c; color: #fff; font-size: 8px; font-weight: 400; line-height: 12px; text-align: center; }
```

FILE: chart.js
```js
// Candles measured from the chart: "type wickTop bodyTop bodyBottom wickBottom".
// g = up, b = down, capitals have a pale wick. Each block shares a scale: y = y0 + v / 3.
var blocks = [
  { y0: 350, rows: [
    "g 770 800 890 890","g 750 775 800 820","g 487 487 775 822","b 458 487 628 628","b 610 628 718 780","g 605 665 718 725",
    "b 640 665 836 850","g 650 668 836 870","b 600 668 728 890","g 615 640 728 770","b 565 640 686 700","b 670 686 716 760",
    "g 612 662 718 720","g 615 656 662 700","b 640 656 702 705","g 575 632 702 725","g 520 548 632 632","b 485 548 592 592",
    "g 475 504 592 592","b 500 504 632 632","g 515 522 632 635","b 515 525 602 648","b 580 602 618 660","b 605 618 620 640",
    "b 578 618 620 635","G 580 606 620 640","B 606 606 656 720","b 640 656 662 665","B 645 662 685 712","G 645 654 685 688",
    "G 632 652 656 660","B 640 652 656 660","B 650 656 690 692","B 668 690 720 738","G 440 490 720 740","G 335 405 490 512",
    "G 290 302 405 420","G 98 156 302 350","B 98 156 292 300","B 245 292 372 372","B 360 372 404 470","B 404 404 542 642",
    "G 405 454 542 545","G 340 366 454 470","b 365 366 418 465","G 348 410 418 440","B 405 410 448 465","G 338 362 448 465",
    "B 362 362 386 430","G 338 372 386 400","b 345 372 378 410","b 345 378 428 430","b 405 428 466 490","b 418 466 470 480",
    "b 468 470 594 594","g 534 534 594 598","g 450 450 534 560","b 412 450 456 456","g 418 422 456 512","b 392 418 422 425",
    "b 358 416 418 418","g 300 320 418 420","b 305 320 410 470","b 405 438 504 510","g 370 398 504 505","b 380 398 402 445",
    "g 318 344 402 405","b 258 344 446 452","g 255 310 446 450","g 215 258 310 368",
    "g 100 162 260 262","b 105 162 194 200","g 85 118 194 225"
  ] },
  { y0: 230, rows: [
    "g 345 350 478 480","b 345 352 455 485","b 420 455 540 548","g 422 430 540 542","g 350 358 430 430","g 252 252 358 382",
    "g 145 240 252 270","g 155 184 240 255","b 130 183 186 225","g 128 145 186 215","g 45 70 145 165","b 50 70 85 160"
  ] },
  { y0: 90, rows: [
    "g 380 432 505 540","b 420 432 515 600","b 362 515 625 638","g 232 320 624 723","g 45 292 322 325","g 198 262 292 368",
    "g 132 147 262 320","b 28 147 278 310","b 158 278 284 310","g 140 165 284 350","b 108 165 318 318","g 215 220 318 332",
    "B 150 220 380 395","G 228 297 380 380","B 248 297 335 350","B 250 335 422 438","G 338 400 422 430","B 355 400 472 472"
  ] },
  { y0: 230, rows: [
    "b 30 50 262 265","B 228 262 290 338","B 290 290 365 415","B 365 365 446 555","B 378 446 476 545","G 410 472 476 545",
    "G 410 440 476 510","G 333 376 440 470","b 350 376 520 555","G 350 350 520 565","G 172 236 350 388","b 198 236 282 385",
    "B 268 282 330 370","B 300 330 360 370","B 308 360 438 480","G 312 314 438 440","B 285 314 324 330","G 262 276 324 330",
    "b 265 276 418 485","b 370 370 376 488","g 336 336 376 378","g 265 290 338 340","b 288 290 332 435","g 42 132 332 335",
    "b 130 132 235 240","b 235 235 282 348"
  ] },
  { y0: 280, rows: [
    "b 103 133 397 420","g 155 237 397 418","g 155 198 237 268","g 183 190 198 292","g 135 160 190 240","b 150 160 285 350",
    "g 150 232 285 285","b 213 232 335 335","g 285 310 335 390","b 262 310 345 360","b 285 345 378 435","g 276 276 378 382",
    "b 222 276 285 285","b 250 285 300 300","b 225 300 360 445","b 338 360 390 430","g 375 375 390 425","g 338 340 375 405",
    "b 318 340 350 352","g 312 333 350 360","b 335 335 462 462","b 462 462 478 500","g 462 468 476 560","g 392 412 470 472",
    "b 408 412 442 445","g 382 428 442 470","b 425 428 487 487","g 380 382 487 490","b 380 382 716 716","g 696 696 716 758",
    "g 630 636 696 758","g 478 522 636 636","g 450 483 522 587","b 483 483 540 680","g 448 462 540 575","g 262 282 465 467",
    "b 226 282 420 480","b 420 420 635 650","g 485 518 635 635","g 335 355 518 540","B 260 355 437 437","G 312 350 437 495",
    "G 160 160 350 352","B 105 160 260 262","B 235 260 305 420","B 245 305 420 450","B 282 420 437 500","G 292 308 437 437",
    "B 285 308 417 417","B 395 417 445 530","B 410 445 502 552","G 248 248 502 525","B 228 248 385 425"
  ] }
];

var NS = "http://www.w3.org/2000/svg";
var svg = document.createElementNS(NS, "svg");
svg.setAttribute("width", "1167");
svg.setAttribute("height", "570");
svg.setAttribute("viewBox", "38 77 1167 570");

function add(tag, attrs) {
  var el = document.createElementNS(NS, tag);
  for (var k in attrs) el.setAttribute(k, attrs[k]);
  svg.appendChild(el);
}

// Session dividers
[145, 532].forEach(function (x) {
  add("line", { x1: x + .5, x2: x + .5, y1: 77, y2: 647, stroke: "#d4d6d8", "stroke-dasharray": "4 3" });
});

// Candles
var index = 0;
blocks.forEach(function (block) {
  block.rows.forEach(function (row) {
    var p = row.split(" ");
    var y = function (n) { return block.y0 + Number(p[n]) / 3; };
    var c = Math.round(41 + 4.03 * index);
    var up = p[0].toLowerCase() === "g";
    var pale = p[0] === "G" || p[0] === "B";
    add("rect", { x: c, y: y(1), width: 1, height: y(4) - y(1), fill: pale ? "#bfc1c1" : "#5c5c5c" });
    var h = Math.max(y(3) - y(2), 1.5);
    if (up) add("rect", { x: c - .75, y: y(2), width: 2.5, height: h, fill: "#5f9e74", stroke: "#2c6e45", "stroke-width": .5 });
    else add("rect", { x: c - 1, y: y(2), width: 3, height: h, fill: "#000" });
    index++;
  });
});

// Drawings
add("rect", { x: 581.5, y: 329.5, width: 65, height: 117, fill: "none", stroke: "#2f8cc0", "stroke-width": 1.5 });
add("line", { x1: 650, x2: 877, y1: 434.5, y2: 434.5, stroke: "#444", "stroke-dasharray": "3 3" });
add("line", { x1: 174, x2: 887, y1: 597, y2: 597, stroke: "#71849a" });
add("line", { x1: 679, x2: 880, y1: 532.5, y2: 532.5, stroke: "#a9bccf" });
add("path", { d: "M130.500 283v9M126 287.500h9", stroke: "#555", fill: "none" });

document.getElementById("chart").appendChild(svg);
```
